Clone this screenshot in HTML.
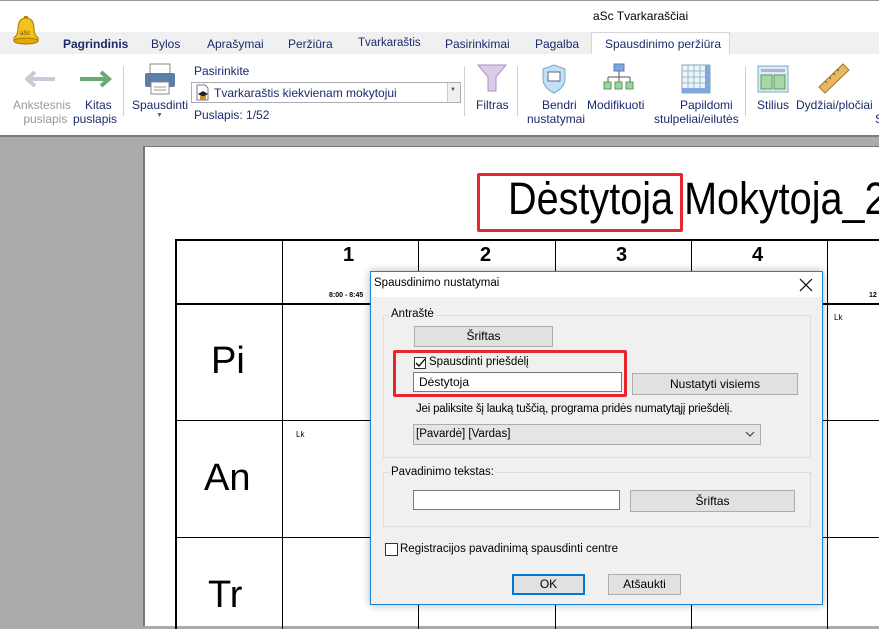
<!DOCTYPE html>
<html><head><meta charset="utf-8"><style>
*{box-sizing:border-box;margin:0;padding:0}
body{width:879px;height:619px;overflow:hidden;position:relative;font-family:"Liberation Sans","DejaVu Sans",sans-serif;font-size:12px;color:#000;background:#ababab}
.a{position:absolute}
.t{position:absolute;white-space:nowrap}
.rib{color:#1b2a6b}
.btn{position:absolute;background:#e1e1e1;border:1px solid #adadad;text-align:center;font-size:12px;line-height:18px}
.inp{position:absolute;background:#fff;border:1px solid #7a7a7a;font-size:12px;line-height:18px;padding-left:5px}
.vl{position:absolute;background:#000;width:1px}
.hl{position:absolute;background:#000;height:1px}
.big{position:absolute;font-family:"Liberation Sans",Arial,sans-serif;white-space:nowrap}
.dlg{font-size:11.5px}
</style></head><body>
<div class="a" style="left:0;top:0;width:879px;height:32px;background:#fff;border-top:1px solid #999"></div>
<div class="t" style="left:593px;top:9px;font-size:12px">aSc Tvarkaraščiai</div>
<div class="a" style="left:0;top:32px;width:879px;height:22px;background:#f0f0f0"></div>
<div class="a" style="left:591px;top:32px;width:139px;height:22px;background:#fff;border:1px solid #d5d5d5;border-bottom:none"></div>
<svg class="a" style="left:12px;top:14px" width="28" height="32" viewBox="0 0 28 32"><path d="M12 2h4v3h-4z" fill="#b58a00"/><path d="M14 4c-6 0-8 5-8 11 0 5-2 7-4 9v3h24v-3c-2-2-4-4-4-9 0-6-2-11-8-11z" fill="#f3c21a" stroke="#a67a00"/><ellipse cx="14" cy="27" rx="12" ry="3" fill="#e5a800" stroke="#a67a00"/><text x="8" y="21" font-size="6" fill="#6a4a00" font-family="Liberation Sans">aSc</text></svg>
<div class="t rib" style="left:63px;top:37px;font-weight:bold">Pagrindinis</div>
<div class="t rib" style="left:151px;top:37px">Bylos</div>
<div class="t rib" style="left:207px;top:37px">Aprašymai</div>
<div class="t rib" style="left:288px;top:37px">Peržiūra</div>
<div class="t rib" style="left:358px;top:37px;font-size:11.5px">Tvarkaraštis</div>
<div class="t rib" style="left:445px;top:37px">Pasirinkimai</div>
<div class="t rib" style="left:535px;top:37px">Pagalba</div>
<div class="t rib" style="left:605px;top:37px">Spausdinimo peržiūra</div>
<div class="a" style="left:0;top:54px;width:879px;height:83px;background:#fff;border-bottom:2px solid #7b7b7b"></div>
<svg class="a" style="left:25px;top:70px" width="32" height="18"><path d="M2 9h28M10 2L2 9l8 7" fill="none" stroke="#c8cad8" stroke-width="4"/></svg>
<svg class="a" style="left:80px;top:70px" width="32" height="18"><path d="M0 9h28M21 2l8 7-8 7" fill="none" stroke="#6aaa78" stroke-width="4"/></svg>
<div class="t" style="left:13px;top:98px;color:#999;text-align:center;line-height:14px">Ankstesnis<br>&nbsp;&nbsp;puslapis</div>
<div class="t rib" style="left:73px;top:98px;text-align:center;line-height:14px">&nbsp;&nbsp;Kitas<br>puslapis</div>
<div class="a" style="left:123px;top:66px;width:1px;height:50px;background:#d0d0d0"></div>
<svg class="a" style="left:143px;top:62px" width="34" height="34"><rect x="7" y="2" width="20" height="10" fill="#fff" stroke="#888"/><rect x="2" y="11" width="30" height="14" rx="2" fill="#5c7fa8"/><rect x="8" y="20" width="18" height="12" fill="#fff" stroke="#888"/><path d="M11 25h12M11 28h12" stroke="#999"/></svg>
<div class="t rib" style="left:132px;top:98px">Spausdinti</div>
<div class="t" style="left:156px;top:112px;font-size:7px;color:#4a6aa0">▼</div>
<div class="t rib" style="left:194px;top:64px">Pasirinkite</div>
<div class="a" style="left:191px;top:82px;width:270px;height:21px;border:1px solid #abadb3;background:#fff"></div>
<div class="a" style="left:447px;top:83px;width:13px;height:19px;background:#f0f0f0;border-left:1px solid #ccc"></div>
<div class="t" style="left:450px;top:87px;font-size:6px;color:#555">▼</div>
<svg class="a" style="left:194px;top:84px" width="16" height="17"><path d="M3 1h8l3 3v12H3z" fill="#fff" stroke="#779"/><path d="M4 10l5-3 5 3-5 3z" fill="#222"/><rect x="6" y="12" width="6" height="4" fill="#d48a30"/></svg>
<div class="t rib" style="left:214px;top:86px">Tvarkaraštis kiekvienam mokytojui</div>
<div class="t rib" style="left:194px;top:108px">Puslapis: 1/52</div>
<div class="a" style="left:464px;top:66px;width:1px;height:50px;background:#d0d0d0"></div>
<svg class="a" style="left:476px;top:63px" width="32" height="30"><path d="M2 2h28L20 14v14h-8V14z" fill="#d9cce8" stroke="#a890c0"/></svg>
<div class="t rib" style="left:476px;top:98px">Filtras</div>
<div class="a" style="left:517px;top:66px;width:1px;height:50px;background:#d0d0d0"></div>
<svg class="a" style="left:540px;top:63px" width="28" height="32"><path d="M14 2l11 4v10c0 7-5 11-11 14C8 27 3 23 3 16V6z" fill="#bfe0f7" stroke="#7aa8c8"/><rect x="8" y="9" width="12" height="9" fill="#fff" stroke="#668"/></svg>
<div class="t rib" style="left:527px;top:98px;text-align:center;line-height:14px">&nbsp;&nbsp;Bendri<br>nustatymai</div>
<svg class="a" style="left:603px;top:63px" width="32" height="32"><rect x="11" y="1" width="10" height="7" fill="#7ea9e0" stroke="#5578b8"/><path d="M16 8v6M5 14h22M5 14v5M16 14v5M27 14v5" stroke="#555" fill="none"/><rect x="1" y="19" width="7" height="7" fill="#9ed49e" stroke="#5a9a5a"/><rect x="12" y="19" width="7" height="7" fill="#9ed49e" stroke="#5a9a5a"/><rect x="23" y="19" width="7" height="7" fill="#9ed49e" stroke="#5a9a5a"/></svg>
<div class="t rib" style="left:587px;top:98px">Modifikuoti</div>
<svg class="a" style="left:681px;top:64px" width="30" height="30"><rect x="1" y="1" width="28" height="28" fill="#eef4fb" stroke="#8aa"/><path d="M7 1v28M13 1v28M19 1v28M25 1v28M1 7h28M1 13h28M1 19h28M1 25h28" stroke="#9bc"/><rect x="24" y="1" width="5" height="28" fill="#7ea9e0"/><rect x="1" y="24" width="28" height="5" fill="#7ea9e0"/></svg>
<div class="t rib" style="left:654px;top:98px;text-align:center;line-height:14px">&nbsp;&nbsp;&nbsp;&nbsp;&nbsp;&nbsp;Papildomi<br>stulpeliai/eilutės</div>
<div class="a" style="left:745px;top:66px;width:1px;height:50px;background:#d0d0d0"></div>
<svg class="a" style="left:757px;top:65px" width="32" height="28"><rect x="1" y="1" width="30" height="26" fill="#d8eef8" stroke="#7aa8c8"/><rect x="4" y="4" width="24" height="3" fill="#c9a8d8"/><rect x="4" y="10" width="11" height="14" fill="#a8d8a8" stroke="#5a9a5a"/><rect x="17" y="10" width="11" height="14" fill="#a8d8a8" stroke="#5a9a5a"/></svg>
<div class="t rib" style="left:757px;top:98px">Stilius</div>
<svg class="a" style="left:817px;top:62px" width="34" height="32"><path d="M2 25L26 2l6 6L8 31z" fill="#e8b860" stroke="#a8782a"/><path d="M8 19l2 2M12 15l2 2M16 11l2 2M20 7l2 2" stroke="#7a5a2a"/></svg>
<div class="t rib" style="left:796px;top:98px">Dydžiai/pločiai</div>
<div class="t rib" style="left:875px;top:112px">S</div>
<div class="a" style="left:143px;top:146px;width:740px;height:480px;background:#fff;border-left:2px solid #777;border-top:1px solid #777"></div>
<div class="big" style="left:508px;top:174px;font-size:45px;line-height:50px;transform:scaleX(0.88);transform-origin:0 0">Dėstytoja Mokytoja_2</div>
<div class="a" style="left:477px;top:173px;width:206px;height:59px;border:3px solid #e8262e;border-radius:2px"></div>
<div class="hl" style="left:176px;top:239px;width:710px;height:2px"></div>
<div class="hl" style="left:176px;top:303px;width:710px;height:2px"></div>
<div class="hl" style="left:176px;top:420px;width:710px"></div>
<div class="hl" style="left:176px;top:537px;width:710px"></div>
<div class="vl" style="left:175px;top:239px;height:390px;width:2px"></div>
<div class="vl" style="left:282px;top:239px;height:390px"></div>
<div class="vl" style="left:418px;top:239px;height:390px"></div>
<div class="vl" style="left:555px;top:239px;height:390px"></div>
<div class="vl" style="left:691px;top:239px;height:390px"></div>
<div class="vl" style="left:827px;top:239px;height:390px"></div>
<div class="big" style="left:343px;top:244px;font-size:20px;font-weight:bold">1</div>
<div class="big" style="left:480px;top:244px;font-size:20px;font-weight:bold">2</div>
<div class="big" style="left:616px;top:244px;font-size:20px;font-weight:bold">3</div>
<div class="big" style="left:752px;top:244px;font-size:20px;font-weight:bold">4</div>
<div class="big" style="left:329px;top:292px;font-size:7px;font-weight:bold">8:00 - 8:45</div>
<div class="big" style="left:869px;top:292px;font-size:7px;font-weight:bold">12</div>
<div class="big" style="left:834px;top:313px;font-size:8px">Lk</div>
<div class="big" style="left:296px;top:430px;font-size:8px">Lk</div>
<div class="big" style="left:211px;top:340px;font-size:38px">Pi</div>
<div class="big" style="left:204px;top:457px;font-size:38px">An</div>
<div class="big" style="left:208px;top:574px;font-size:38px">Tr</div>
<div class="dlg">
<div class="a" style="left:370px;top:271px;width:453px;height:334px;background:#f0f0f0;border:1px solid #1883d7;box-shadow:0 0 8px rgba(0,0,0,.3)"></div>
<div class="a" style="left:371px;top:272px;width:451px;height:25px;background:#fff"></div>
<div class="t" style="left:374px;top:277px">Spausdinimo nustatymai</div>
<svg class="a" style="left:799px;top:278px" width="14" height="14"><path d="M1 1l12 12M13 1L1 13" stroke="#000" stroke-width="1.2"/></svg>
<div class="a" style="left:383px;top:315px;width:428px;height:143px;border:1px solid #dcdcdc"></div>
<div class="t" style="left:389px;top:308px;background:#f0f0f0;padding:0 2px">Antraštė</div>
<div class="btn" style="left:414px;top:326px;width:139px;height:21px">Šriftas</div>
<div class="a" style="left:414px;top:357px;width:12px;height:12px;border:1px solid #333;background:#fff"></div>
<svg class="a" style="left:415px;top:358px" width="11" height="11"><path d="M1 5l3 3 6-7" fill="none" stroke="#000" stroke-width="1.3"/></svg>
<div class="t" style="left:429px;top:356px">Spausdinti priešdėlį</div>
<div class="inp" style="left:413px;top:372px;width:209px;height:20px">Dėstytoja</div>
<div class="a" style="left:393px;top:350px;width:234px;height:47px;border:3px solid #e8262e;border-radius:2px"></div>
<div class="btn" style="left:632px;top:373px;width:166px;height:22px;line-height:20px">Nustatyti visiems</div>
<div class="t" style="left:416px;top:403px;letter-spacing:-0.2px">Jei paliksite šį lauką tuščią, programa pridės numatytąjį priešdėlį.</div>
<div class="a" style="left:413px;top:424px;width:348px;height:21px;background:#e5e5e5;border:1px solid #adadad"></div>
<div class="t" style="left:416px;top:428px">[Pavardė] [Vardas]</div>
<svg class="a" style="left:745px;top:431px" width="10" height="7"><path d="M1 1l4 4 4-4" fill="none" stroke="#333"/></svg>
<div class="a" style="left:383px;top:472px;width:428px;height:55px;border:1px solid #dcdcdc"></div>
<div class="t" style="left:389px;top:466px;background:#f0f0f0;padding:0 2px">Pavadinimo tekstas:</div>
<div class="inp" style="left:413px;top:490px;width:207px;height:20px"></div>
<div class="btn" style="left:630px;top:490px;width:165px;height:22px;line-height:20px">Šriftas</div>
<div class="a" style="left:385px;top:543px;width:13px;height:13px;border:1px solid #333;background:#fff"></div>
<div class="t" style="left:400px;top:543px">Registracijos pavadinimą spausdinti centre</div>
<div class="btn" style="left:512px;top:574px;width:73px;height:21px;border:2px solid #0078d7;line-height:17px">OK</div>
<div class="btn" style="left:608px;top:574px;width:73px;height:21px">Atšaukti</div>
</div>
</body></html>
